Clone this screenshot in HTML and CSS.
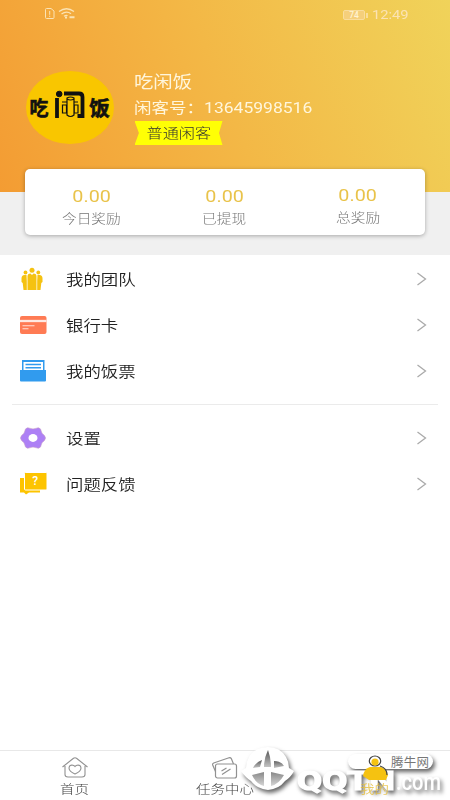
FILE: index.html
```
<!DOCTYPE html>
<html lang="zh-CN">
<head>
<meta charset="utf-8">
<title>我的</title>
<link rel="stylesheet" href="styles.css">
</head>
<body>
<div class="app">
  <header class="hero">
    <div class="status">
      <svg class="status-left" width="34" height="14" viewBox="0 0 34 14" fill="none" stroke="currentColor">
        <path d="M4.500 1.500h4.500l3 2.500v6.500q0 1-1 1H4.500q-1 0-1-1v-8q0-1 1-1M7.700 4v3.800M7.700 8.700v1.200"/>
        <path d="M17 4.500q7.500-5.500 15 0M19.500 7q5-3.500 9.500-.3M22 9.300q2.300-1.500 3.500-.5" stroke-width="1.300"/>
        <path d="M23 10.500h2M27.500 10.200h5" stroke-width="2"/>
      </svg>
      <div class="status-right">
        <div class="battery"><span>74</span></div>
        <span class="clock">12:49</span>
      </div>
    </div>
    <div class="profile">
      <svg class="avatar" width="88" height="73" viewBox="0 0 88 73">
        <ellipse cx="44" cy="36.500" rx="44" ry="36.500" fill="#f9c600"/>
        <text class="logo-text" transform="translate(3.500 44.500) scale(.95 1)" font-size="20">吃</text>
        <text class="logo-text" transform="translate(63.200 44.500) scale(1.030 1)" font-size="20">饭</text>
        <g fill="none" stroke="#111" stroke-width="3.800">
          <path d="M31 27v20M38 22.500h15q3.500 0 3.500 3.500v19h-5"/>
          <circle cx="33.200" cy="23" r="2.800" fill="#111" stroke-width="1"/>
        </g>
        <g fill="#f9c600" stroke="#111" stroke-width="1.200">
          <path d="M36 31h16M36.500 34h4v8h-4zM48 34h4v8h-4z"/>
          <path d="M41 27q3.500-2 7 0v17q-3.500 3-7 0zM41 28q3.500 2 7 0"/>
        </g>
      </svg>
      <div class="who">
        <div class="name"><span class="wide">吃闲饭</span></div>
        <div class="uid"><span class="wide">闲客号：13645998516</span></div>
        <div class="tag"><span class="wide mid">普通闲客</span></div>
      </div>
    </div>
  </header>
  <section class="summary">
    <div class="card">
      <div class="stat"><b class="wide mid">0.00</b><span class="wide mid">今日奖励</span></div>
      <div class="stat"><b class="wide mid">0.00</b><span class="wide mid">已提现</span></div>
      <div class="stat raised"><b class="wide mid">0.00</b><span class="wide mid">总奖励</span></div>
    </div>
  </section>
  <main class="menu">
    <div class="row">
      <svg class="icon" width="28" height="24" viewBox="0 0 28 24" fill="#f5c211">
        <circle cx="12" cy="3.200" r="2.500"/><circle cx="5.500" cy="5.500" r="1.900"/><circle cx="18.300" cy="5.500" r="1.900"/>
        <path d="M7.500 9.500q0-3 3-3L12 8l1.500-1.500q3 0 3 3V23h-9zM1.500 11.500Q1.500 8 4.500 8h2l.3 6v9H3.500l-.8-7-1.200-1zM22.500 11.500Q22.500 8 19.500 8h-2l-.3 6v9h3.300l.8-7 1.200-1z"/>
      </svg>
      <span class="label wide">我的团队</span>
      <svg class="arrow" width="12" height="14" viewBox="0 0 12 14"><path d="M1.500 1l8 6-8 6"/></svg>
    </div>
    <div class="row">
      <svg class="icon" width="28" height="24" viewBox="0 0 28 24">
        <rect x="0" y="3" width="26.500" height="18" rx="2" fill="#ff7b54"/>
        <path d="M0 8h26.500" stroke="#ffe9e2" stroke-width="2.300"/>
        <path d="M2.500 12.700h12M2.500 15.800h6" stroke="#ffe0d6" stroke-width="1.100"/>
      </svg>
      <span class="label wide">银行卡</span>
      <svg class="arrow" width="12" height="14" viewBox="0 0 12 14"><path d="M1.500 1l8 6-8 6"/></svg>
    </div>
    <div class="row">
      <svg class="icon" width="28" height="24" viewBox="0 0 28 24">
        <path d="M2 1h22.500v10H26v10.500q0 1-1 1H1q-1 0-1-1V11h2z" fill="#319bee"/>
        <path d="M3.500 3H23v8H3.500z" fill="#fff"/>
        <path d="M5.500 5.500h15.500M5.500 8.700h15.500" stroke="#319bee" stroke-width="1.500"/>
      </svg>
      <span class="label wide">我的饭票</span>
      <svg class="arrow" width="12" height="14" viewBox="0 0 12 14"><path d="M1.500 1l8 6-8 6"/></svg>
    </div>
    <hr class="divider">
    <div class="row">
      <svg class="icon" width="28" height="24" viewBox="0 0 28 24">
        <path d="M5.500 3q2-2 4-.8 3.500 1.500 7 0 2-1.200 4 .8l1 3q.5 2 2.500 3 3 3 0 6-2 1-2.500 3l-1 3q-2 2-4 .8-3.500-1.500-7 0-2 1.200-4-.8l-1-3q-.5-2-2.500-3-3-3 0-6 2-1 2.500-3z" fill="#ad80f5" stroke="#c69ac9" stroke-width=".6"/>
        <ellipse cx="13" cy="12" rx="4.500" ry="3.900" fill="#fff"/>
      </svg>
      <span class="label wide">设置</span>
      <svg class="arrow" width="12" height="14" viewBox="0 0 12 14"><path d="M1.500 1l8 6-8 6"/></svg>
    </div>
    <div class="row">
      <svg class="icon" width="28" height="24" viewBox="0 0 28 24">
        <path d="M0 6h5v12h15v2.500H9l-3 2-2-2H0z" fill="#fdc400"/>
        <rect x="4.500" y=".5" width="22.500" height="17.500" rx="1" fill="#fdc400" stroke="#fff" stroke-width="1"/>
        <text class="question" x="12.200" y="13">?</text>
      </svg>
      <span class="label wide">问题反馈</span>
      <svg class="arrow" width="12" height="14" viewBox="0 0 12 14"><path d="M1.500 1l8 6-8 6"/></svg>
    </div>
  </main>
  <nav class="tabs">
    <div class="tab">
      <svg width="28" height="22" viewBox="0 0 28 22" fill="none" stroke="#919191" stroke-width="1.100">
        <path d="M1.500 10L12.500 1.300q1.500-1 3 0L26.500 10M4 9v8.500q0 2.500 3 2.500h14q3 0 3-2.500V9"/>
        <path d="M14 17q-6-2.500-6-6 .5-3.500 4-2.700 1.300.3 2 1.200.7-.9 2-1.200 3.500-.8 4 2.700 0 3.500-6 6z"/>
      </svg>
      <span class="wide mid">首页</span>
    </div>
    <div class="tab">
      <svg width="28" height="22" viewBox="0 0 28 22" fill="none" stroke="#919191" stroke-width="1.200">
        <rect x="4.500" y="7" width="21" height="14" rx="2"/>
        <path d="M4.500 14.500L1.700 8q-.4-1.400 1-2L18 .8q1.600-.4 2.300.8L22.500 7M10.500 14l5-3M11 17.500l8.500-5.500"/>
      </svg>
      <span class="wide mid">任务中心</span>
    </div>
    <div class="tab active">
      <svg width="28" height="22" viewBox="0 0 28 22"></svg>
      <span class="wide mid">我的</span>
    </div>
  </nav>
  <svg class="watermark" width="220" height="65" viewBox="0 0 220 65">
    <defs>
      <linearGradient id="shade" x1="0" y1="0" x2="0" y2="1">
        <stop offset="0" stop-color="#555"/><stop offset="1" stop-color="#c4c4c4"/>
      </linearGradient>
    </defs>
    <g class="mark">
      <path d="M38 12Q25 12 19 22 16 27 16 33L11 36Q16 43 21 46 27 54 38 55 49 54 55 46 61 42 64 36L59 33Q59 27 56 22 50 12 38 12z"/>
      <rect x="118" y="19" width="85" height="15" rx="7.500"/>
      <text class="brand" x="67" y="55" textLength="98" lengthAdjust="spacingAndGlyphs">QQTN</text>
      <text class="dotcom" x="166" y="55" textLength="45" lengthAdjust="spacingAndGlyphs">.com</text>
    </g>
    <g fill="url(#shade)">
      <path d="M38 15Q34 23 34 32h7Q41 23 38 15z"/>
      <path d="M23 33q2-5 9-8l-2 7zM44 26q7 0 10 5l-10 2z"/>
      <path d="M22 40l12-3v14q-8-2-12-11zM41 37l13 3q-5 9-13 11z" opacity=".7"/>
    </g>
    <path d="M133 41q1-7 7-9h10q5 0 8 8l-2 5h-17z" fill="#f5c211"/>
    <ellipse cx="145" cy="26" rx="5.700" ry="5" fill="#fff" stroke="#444" stroke-width="1.200"/>
    <circle cx="145" cy="27" r="3.600" fill="#f5c211"/>
    <path d="M150 31q7 2 7 9" fill="none" stroke="#444" stroke-width="1.200"/>
    <text class="site" x="161" y="31.500" textLength="38">腾牛网</text>
  </svg>
</div>
</body>
</html>
```
FILE: styles.css
```
* { box-sizing: border-box; }
body {
  margin: 0;
  background: #fff;
  font-family: Roboto, "Noto Sans CJK SC", sans-serif;
  font-weight: 300;
  color: #222;
}
.app {
  position: relative;
  width: 450px;
  height: 800px;
  display: flex;
  flex-direction: column;
  overflow: hidden;
}
.wide {
  display: inline-block;
  white-space: nowrap;
  transform: scaleX(1.16);
  transform-origin: left center;
}
.mid { transform-origin: center; }

.hero {
  height: 192px;
  flex: none;
  background: linear-gradient(68deg, #f39c33 0%, #f3b846 50%, #f0d35a 100%);
  color: #fff6dc;
}
.status {
  height: 28px;
  padding: 7px 43px 0 42px;
  display: flex;
  justify-content: space-between;
  color: #fbe3b4;
}
.status-right { display: flex; align-items: center; gap: 7px; height: 15px; }
.battery {
  position: relative;
  width: 22px;
  height: 10px;
  border: 1px solid #f9dd9c;
  border-radius: 2px;
  background: #f5cf7b;
  color: #fff3d2;
  font-size: 8.500px;
  line-height: 9px;
  text-align: center;
  font-weight: 500;
}
.battery::after {
  content: "";
  position: absolute;
  right: -4px;
  top: 2px;
  width: 2px;
  height: 5px;
  background: #f9dd9c;
}
.clock { width: 36px; font-size: 13px; font-weight: 400; transform: scaleX(1.13); transform-origin: left; }
.status-right { margin-right: -1px; }
.profile { display: flex; padding: 43px 0 0 26px; gap: 19.500px; }
.logo-text { font-family: "Noto Sans CJK SC", sans-serif; font-weight: 700; fill: #111; stroke: #111; stroke-width: .6px; }
.name { height: 25px; font-size: 16.700px; line-height: 24px; }
.name, .uid { font-weight: 400; }
.uid { height: 25px; font-size: 15.100px; line-height: 24px; }
.tag {
  width: 88px;
  height: 24px;
  margin-left: 1px;
  background: #ffff05;
  color: #333;
  font-size: 13.900px;
  line-height: 24px;
  text-align: center;
  clip-path: polygon(0 0, 100% 0, 96% 50%, 100% 100%, 0 100%, 5% 50%);
}

.summary { height: 63px; flex: none; background: #f0f0f0; padding: 0 25px; }
.card {
  height: 66px;
  margin-top: -23px;
  padding-top: 16px;
  display: grid;
  grid-template-columns: repeat(3, 1fr);
  background: #fff;
  border-radius: 5px;
  box-shadow: 0 1px 4px rgba(0, 0, 0, .3);
}
.stat { display: flex; flex-direction: column; align-items: center; color: #777; font-size: 12.700px; line-height: 22px; margin-left: -1px; }
.stat b { font-size: 17px; font-weight: 400; line-height: 23px; color: #e9c34a; }
.raised { margin-top: -1px; }

.menu { flex: 1; padding-top: 1px; }
.row { height: 46px; display: flex; align-items: center; padding: 0 22px 0 20px; }
.icon { flex: none; margin-right: 18px; }
.label { flex: 1; font-size: 15px; line-height: 24px; padding-top: 1px; font-weight: 350; }
.arrow { flex: none; fill: none; stroke: #aaa; stroke-width: 1.300; }
.divider { margin: 10px 12px 10px; border: 0; border-top: 1px solid #ebebeb; }
.question { font: 500 12px Roboto, sans-serif; fill: #fff; }

.tabs { height: 50px; flex: none; display: grid; grid-template-columns: repeat(3, 1fr); border-top: 1px solid #e8e8e8; }
.tab { display: flex; flex-direction: column; align-items: center; padding-top: 6px; font-size: 12.500px; line-height: 22px; color: #444; }
.active span { position: relative; z-index: 1; color: #e6bd35; font-weight: 400; opacity: .75; }
.watermark { position: absolute; left: 230px; top: 735px; }
.mark { fill: #fff; filter: drop-shadow(2px 3px 2px rgba(0, 0, 0, .6)); }
.brand { font: 700 26px Roboto, sans-serif; stroke: #fff; stroke-width: 1.200px; }
.dotcom { font: 500 23px Roboto, sans-serif; }
.site { font: 400 12.500px "Noto Sans CJK SC", sans-serif; fill: #777; }
```
